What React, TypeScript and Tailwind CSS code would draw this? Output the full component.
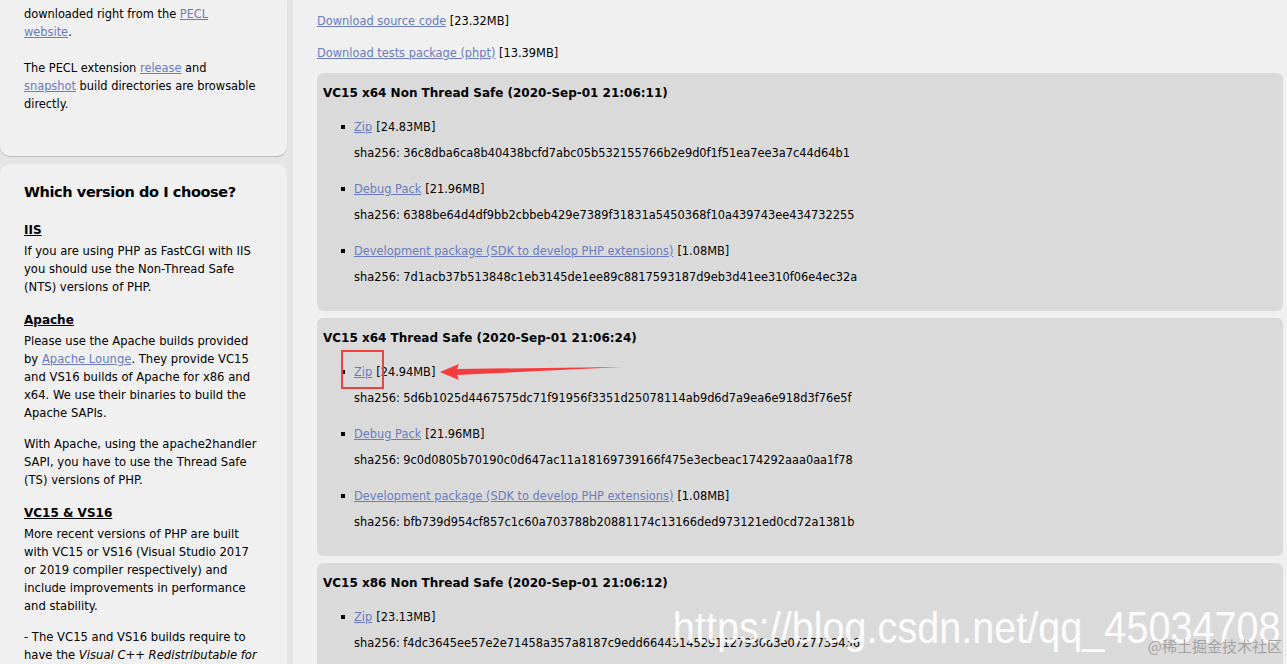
import React from 'react';

type Pkg = { label: string; size: string; sha: string };
type Build = { title: string; items: Pkg[] };

const builds: Build[] = [
  {
    title: 'VC15 x64 Non Thread Safe (2020-Sep-01 21:06:11)',
    items: [
      { label: 'Zip', size: '[24.83MB]', sha: '36c8dba6ca8b40438bcfd7abc05b532155766b2e9d0f1f51ea7ee3a7c44d64b1' },
      { label: 'Debug Pack', size: '[21.96MB]', sha: '6388be64d4df9bb2cbbeb429e7389f31831a5450368f10a439743ee434732255' },
      { label: 'Development package (SDK to develop PHP extensions)', size: '[1.08MB]', sha: '7d1acb37b513848c1eb3145de1ee89c8817593187d9eb3d41ee310f06e4ec32a' },
    ],
  },
  {
    title: 'VC15 x64 Thread Safe (2020-Sep-01 21:06:24)',
    items: [
      { label: 'Zip', size: '[24.94MB]', sha: '5d6b1025d4467575dc71f91956f3351d25078114ab9d6d7a9ea6e918d3f76e5f' },
      { label: 'Debug Pack', size: '[21.96MB]', sha: '9c0d0805b70190c0d647ac11a18169739166f475e3ecbeac174292aaa0aa1f78' },
      { label: 'Development package (SDK to develop PHP extensions)', size: '[1.08MB]', sha: 'bfb739d954cf857c1c60a703788b20881174c13166ded973121ed0cd72a1381b' },
    ],
  },
  {
    title: 'VC15 x86 Non Thread Safe (2020-Sep-01 21:06:12)',
    items: [
      { label: 'Zip', size: '[23.13MB]', sha: 'f4dc3645ee57e2e71458a357a8187c9edd66443145291127930d3e0727739436' },
      { label: 'Debug Pack', size: '[21.21MB]', sha: '1a0c3e5b7d2f9e8a46c1b0d3f5e7a9c2b4d6f8e0a1c3e5b7d9f1a3c5e7b9d1f3' },
    ],
  },
];

const linkCls = 'text-[#6a7cbf] underline';

function BuildBox({ build }: { build: Build }) {
  return (
    <div className="rounded-[6px] bg-[#dadada] pl-[6px] pt-[11px] pb-[25px]">
      <div className="font-bold text-[12px] leading-[18px]">{build.title}</div>
      <div className="mt-[16px] flex flex-col gap-[18px]">
        {build.items.map((p) => (
          <div key={p.label} className="flex flex-col gap-[8px]">
            <div className="flex items-center whitespace-nowrap">
              <span className="ml-[18px] mr-[9px] inline-block h-[4px] w-[4px] bg-black" />
              <a className={linkCls} href="#">{p.label}</a>
              <span className="ml-[4px]">{p.size}</span>
            </div>
            <div className="pl-[31px] whitespace-nowrap">sha256: {p.sha}</div>
          </div>
        ))}
      </div>
    </div>
  );
}

export default function App() {
  return (
    <div className="relative flex h-[664px] overflow-hidden font-['DejaVu_Sans',sans-serif] text-[11.4px] leading-[18px] text-black">
      {/* sidebar */}
      <aside className="flex w-[293px] shrink-0 flex-col gap-[8px] bg-[#e5e5e5] pr-[6px]">
        <div className="h-[156px] shrink-0 rounded-b-[10px] bg-[#f0f0f0] px-[24px] pt-[5px] shadow-[0_1px_1px_rgba(0,0,0,0.18)] whitespace-nowrap">
          <p>
            downloaded right from the <a className={linkCls} href="#">PECL</a>
            <br />
            <a className={linkCls} href="#">website</a>.
          </p>
          <p className="mt-[18px]">
            The PECL extension <a className={linkCls} href="#">release</a> and
            <br />
            <a className={linkCls} href="#">snapshot</a> build directories are browsable
            <br />
            directly.
          </p>
        </div>
        <div className="flex-1 rounded-t-[10px] bg-[#f0f0f0] px-[24px] pt-[18px] text-[11.6px] whitespace-nowrap">
          <h3 className="text-[14.5px] leading-[20px] font-bold tracking-[-0.4px]">Which version do I choose?</h3>
          <h4 className="mt-[19px] text-[12px] font-bold underline">IIS</h4>
          <p className="mt-[3px]">
            If you are using PHP as FastCGI with IIS
            <br />
            you should use the Non-Thread Safe
            <br />
            (NTS) versions of PHP.
          </p>
          <h4 className="mt-[15px] text-[12px] font-bold underline">Apache</h4>
          <p className="mt-[3px]">
            Please use the Apache builds provided
            <br />
            by <a className={linkCls} href="#">Apache Lounge</a>. They provide VC15
            <br />
            and VS16 builds of Apache for x86 and
            <br />
            x64. We use their binaries to build the
            <br />
            Apache SAPIs.
          </p>
          <p className="mt-[13px]">
            With Apache, using the apache2handler
            <br />
            SAPI, you have to use the Thread Safe
            <br />
            (TS) versions of PHP.
          </p>
          <h4 className="mt-[15px] text-[12px] font-bold underline">VC15 &amp; VS16</h4>
          <p className="mt-[3px]">
            More recent versions of PHP are built
            <br />
            with VC15 or VS16 (Visual Studio 2017
            <br />
            or 2019 compiler respectively) and
            <br />
            include improvements in performance
            <br />
            and stability.
          </p>
          <p className="mt-[13px]">
            - The VC15 and VS16 builds require to
            <br />
            have the <i>Visual C++ Redistributable for</i>
            <br />
            <i>Visual Studio 2015-2019</i> x64 or x86
          </p>
        </div>
      </aside>

      {/* main */}
      <main className="flex-1 bg-[#f0f0f0] pl-[24px] pr-[4px] pt-[12px]">
        <p className="whitespace-nowrap">
          <a className={linkCls} href="#">Download source code</a> [23.32MB]
        </p>
        <p className="mt-[14px] whitespace-nowrap">
          <a className={linkCls} href="#">Download tests package (phpt)</a> [13.39MB]
        </p>
        <div className="mt-[11px] flex flex-col gap-[7px]">
          {builds.map((b) => (
            <BuildBox key={b.title} build={b} />
          ))}
        </div>
      </main>

      {/* annotation: red box + arrow */}
      <div className="absolute left-[341px] top-[350px] h-[39px] w-[43px] border-2 border-[#f2403f]" />
      <svg className="absolute left-[438px] top-[360px]" width="190" height="24" viewBox="0 0 190 24">
        <polygon points="2,12 21,4 19,9 184,7 19,15 21,20" fill="#f53b3b" />
      </svg>

      {/* watermarks */}
      <div className="absolute right-[6px] top-[605px] origin-right scale-x-[0.88] whitespace-nowrap font-['Liberation_Sans',sans-serif] text-[45px] leading-[45px] text-white/90">
        https://blog.csdn.net/qq_45034708
      </div>
      <div className="absolute right-[5px] top-[635px] font-['Noto_Sans_CJK_SC',sans-serif] text-[15px] leading-[22px] text-[#a3a3a3]">
        @稀土掘金技术社区
      </div>
    </div>
  );
}
